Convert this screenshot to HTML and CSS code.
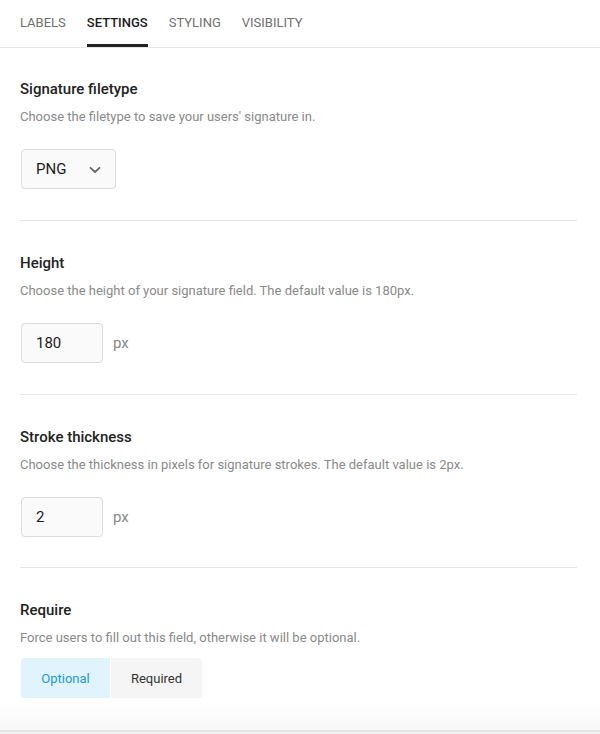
FILE: index.html
```html
<!DOCTYPE html>
<html>
<head>
<meta charset="utf-8">
<link rel="stylesheet" href="styles.css">
</head>
<body>
<div class="panel">
  <nav class="tabs">
    <span class="tab">LABELS</span>
    <span class="tab active">SETTINGS</span>
    <span class="tab">STYLING</span>
    <span class="tab">VISIBILITY</span>
  </nav>
  <div class="content">
    <section class="section first">
      <h3 class="title">Signature filetype</h3>
      <p class="desc">Choose the filetype to save your users' signature in.</p>
      <div class="select">
        <span>PNG</span>
        <svg class="chev" width="12" height="8" viewBox="0 0 12 8"><path d="M1.5 1.8 L6 6 L10.5 1.8" fill="none" stroke="#666" stroke-width="1.8" stroke-linecap="round" stroke-linejoin="round"/></svg>
      </div>
    </section>
    <section class="section">
      <h3 class="title">Height</h3>
      <p class="desc">Choose the height of your signature field. The default value is 180px.</p>
      <div class="row">
        <div class="input">180</div>
        <span class="unit">px</span>
      </div>
    </section>
    <section class="section third">
      <h3 class="title">Stroke thickness</h3>
      <p class="desc">Choose the thickness in pixels for signature strokes. The default value is 2px.</p>
      <div class="row">
        <div class="input">2</div>
        <span class="unit">px</span>
      </div>
    </section>
    <section class="section last">
      <h3 class="title">Require</h3>
      <p class="desc">Force users to fill out this field, otherwise it will be optional.</p>
      <div class="toggle">
        <span class="opt on">Optional</span>
        <span class="opt">Required</span>
      </div>
    </section>
  </div>
  <div class="footer"></div>
</div>
</body>
</html>
```
FILE: styles.css
```css
* { box-sizing: border-box; }
html, body { margin: 0; padding: 0; background: #fff; }
body {
  font-family: Roboto, "Liberation Sans", sans-serif;
  width: 600px;
  height: 734px;
  overflow: hidden;
}
.panel { display: flex; flex-direction: column; height: 734px; }
.tabs {
  display: flex;
  gap: 21px;
  height: 48px;
  padding: 0 20px;
  border-bottom: 1px solid #e6e6e6;
  flex: none;
}
.tab {
  font-size: 13px;
  font-weight: 400;
  color: #6f6f6f;
  line-height: 46px;
  height: 47px;
  border-bottom: 3px solid transparent;
}
.tab.active { color: #1a1a1a; font-weight: 500; border-bottom-color: #222; }
.content { padding: 0 23px 0 20px; flex: none; }
.section {
  padding: 32px 0 31px;
  border-bottom: 1px solid #e6e6e6;
}
.section.first { padding-top: 31px; }
.section.third { padding-bottom: 30px; }
.section.last { border-bottom: none; padding-bottom: 0; }
.title {
  margin: 0 0 8px;
  font-size: 15px;
  font-weight: 500;
  line-height: 20px;
  color: #222;
}
.desc {
  margin: 0 0 22px;
  font-size: 13px;
  line-height: 20px;
  color: #8a8a8a;
}
.last .desc { margin-bottom: 10px; }
.select {
  display: flex;
  align-items: center;
  justify-content: space-between;
  width: 95px;
  height: 40px;
  margin-left: 1px;
  padding: 0 14px 0 14px;
  background: #fafafa;
  border: 1px solid #dcdcdc;
  border-radius: 4px;
  font-size: 15px;
  font-weight: 400;
  color: #1a1a1a;
}
.chev { margin-top: 1px; }
.row { display: flex; align-items: center; gap: 10px; }
.input {
  width: 82px;
  height: 40px;
  margin-left: 1px;
  padding: 0 14px;
  display: flex;
  align-items: center;
  background: #fafafa;
  border: 1px solid #dcdcdc;
  border-radius: 4px;
  font-size: 15px;
  font-weight: 400;
  color: #1a1a1a;
}
.unit { font-size: 15px; color: #888; }
.toggle {
  display: flex;
  gap: 1px;
  margin-left: 1px;
  width: max-content;
  border-radius: 4px;
  overflow: hidden;
}
.opt {
  display: flex;
  align-items: center;
  justify-content: center;
  height: 40px;
  width: 91px;
  font-size: 13px;
  color: #333;
  background: #f5f5f5;
}
.opt.on { width: 89px; background: #e1f4fd; color: #1c9ad6; }
.footer {
  flex: 1;
  margin-top: 2px;
  background: linear-gradient(#fff 0, #fff 2px, #f8f8f8 28px);
  border-bottom: 2px solid #e3e3e3;
  box-shadow: 0 4px 0 #f2f2f2;
  max-height: 32px;
}
```
